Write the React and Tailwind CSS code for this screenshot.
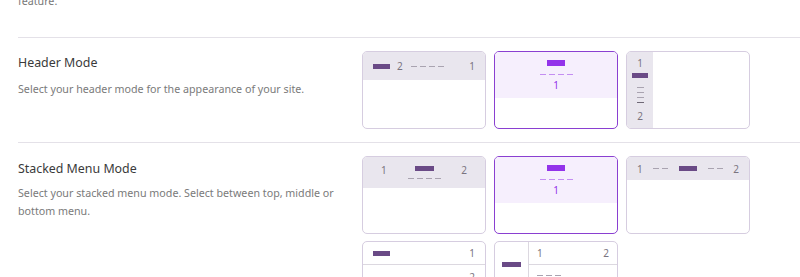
import React from "react";

const Bar = ({ className = "" }) => (
  <div className={`h-[5px] w-[17px] bg-[#6a4a86] ${className}`} />
);

const Dashes = ({ n = 4, color = "bg-[#a9a3b0]", className = "" }) => (
  <div className={`flex gap-[3px] ${className}`}>
    {Array.from({ length: n }).map((_, i) => (
      <div key={i} className={`h-px w-[6px] ${color}`} />
    ))}
  </div>
);

const Card = ({ selected, children, className = "" }) => (
  <div
    className={`relative h-[78px] w-[124px] overflow-hidden rounded-[5px] border bg-white ${
      selected ? "border-[#8a3fd1]" : "border-[#d6cde0]"
    } ${className}`}
  >
    {children}
  </div>
);

const Num = ({ children, className = "" }) => (
  <span className={`text-[10px] leading-[10px] text-[#7a7480] ${className}`}>{children}</span>
);

const SelectedCard = () => (
  <Card selected>
    <div className="flex h-[46px] flex-col items-center bg-[#f6effd] pt-[8px]">
      <div className="h-[6px] w-[18px] bg-[#9333ea]" />
      <Dashes color="bg-[#c48ef2]" className="mt-[8px]" />
      <span className="mt-[5px] text-[10px] leading-[10px] text-[#9333ea]">1</span>
    </div>
  </Card>
);

export default function App() {
  return (
    <div
      className="h-[277px] w-[800px] overflow-hidden bg-white"
      style={{ fontFamily: '"Noto Sans", "Open Sans", sans-serif' }}
    >
      <p className="-mt-[7px] pl-[18px] text-[10.7px] leading-[16px] text-[#777]">feature.</p>

      <div className="ml-[18px] mt-[28px] border-t border-[#e4e1e8]">
        <div className="flex pb-[13px] pt-[13px]">
          <div className="w-[344px] pt-[4px]">
            <h3 className="text-[12.4px] leading-[16px] text-[#3a3a3a]">Header Mode</h3>
            <p className="mt-[9px] text-[10.7px] leading-[18px] text-[#7a7a7a]">
              Select your header mode for the appearance of your site.
            </p>
          </div>
          <div className="flex gap-[8px]">
            <Card>
              <div className="flex h-[28px] items-center bg-[#e9e6ee] px-[10px]">
                <Bar />
                <Num className="ml-[7px]">2</Num>
                <Dashes className="ml-[8px]" />
                <Num className="ml-auto">1</Num>
              </div>
            </Card>
            <SelectedCard />
            <Card>
              <div className="flex h-full w-[26px] flex-col items-center bg-[#e9e6ee] pt-[6px] pb-[7px]">
                <Num className="text-[#5c5660]">1</Num>
                <div className="mt-[5px] h-[5px] w-[16px] bg-[#6a4a86]" />
                <div className="mt-[9px] flex flex-col gap-[4px]">
                  <div className="h-px w-[7px] bg-[#a9a3b0]" />
                  <div className="h-px w-[7px] bg-[#a9a3b0]" />
                  <div className="h-px w-[7px] bg-[#a9a3b0]" />
                  <div className="h-px w-[7px] bg-[#6f6876]" />
                </div>
                <Num className="mt-auto text-[#5c5660]">2</Num>
              </div>
            </Card>
          </div>
        </div>

        <div className="border-t border-[#e4e1e8]">
          <div className="flex pt-[13px]">
            <div className="w-[344px] pt-[5px]">
              <h3 className="text-[12.4px] leading-[16px] text-[#3a3a3a]">Stacked Menu Mode</h3>
              <p className="mt-[7px] w-[326px] text-[10.7px] leading-[18px] text-[#7a7a7a]">
                Select your stacked menu mode. Select between top, middle or bottom menu.
              </p>
            </div>
            <div className="grid grid-cols-[124px_124px_124px] gap-[7px_8px]">
              <Card>
                <div className="flex h-[31px] items-start justify-between bg-[#e9e6ee] px-[18px] pt-[8px]">
                  <Num>1</Num>
                  <div className="flex flex-col items-center pt-[1px]">
                    <div className="h-[5px] w-[19px] bg-[#6a4a86]" />
                    <Dashes className="mt-[7px]" />
                  </div>
                  <Num>2</Num>
                </div>
              </Card>
              <SelectedCard />
              <Card>
                <div className="flex h-[23px] items-center justify-between bg-[#e9e6ee] px-[10px]">
                  <Num>1</Num>
                  <Dashes n={2} />
                  <div className="h-[5px] w-[18px] bg-[#6a4a86]" />
                  <Dashes n={2} />
                  <Num>2</Num>
                </div>
              </Card>
              <Card className="bg-[#e9e6ee]">
                <div className="flex h-[23px] items-center justify-between border-b border-[#dcd8e0] px-[10px]">
                  <Bar />
                  <Num>1</Num>
                </div>
                <div className="flex items-center justify-between px-[10px] pt-[7px]">
                  <Dashes n={3} className="gap-[2px]" />
                  <Num>2</Num>
                </div>
              </Card>
              <Card className="flex bg-[#e9e6ee]">
                <div className="flex w-[34px] items-start justify-center border-r border-[#dcd8e0] pt-[20px]">
                  <div className="h-[5px] w-[19px] bg-[#6a4a86]" />
                </div>
                <div className="flex-1">
                  <div className="flex h-[23px] items-center justify-between border-b border-[#dcd8e0] px-[8px]">
                    <Num>1</Num>
                    <Num>2</Num>
                  </div>
                  <div className="px-[8px] pt-[10px]">
                    <Dashes n={3} className="gap-[2px]" />
                  </div>
                </div>
              </Card>
            </div>
          </div>
        </div>
      </div>
    </div>
  );
}
